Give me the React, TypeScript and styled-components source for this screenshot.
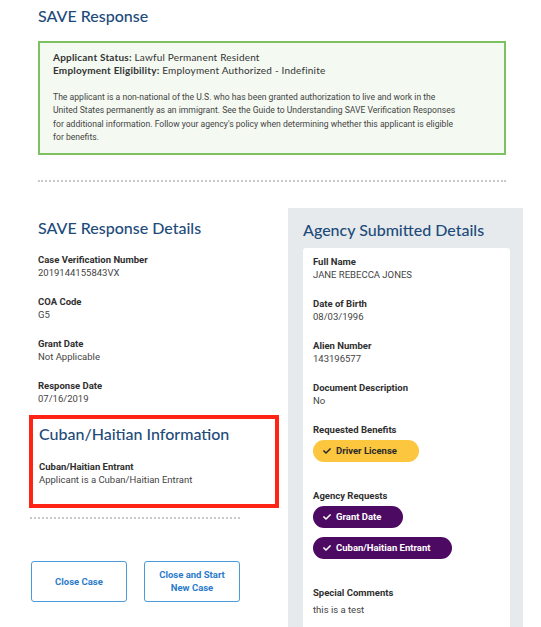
import React, { ReactElement } from "react";
import styled, { createGlobalStyle } from "styled-components";
import { FaCheck } from "react-icons/fa";

const GlobalStyle = createGlobalStyle`
  html, body {
    margin: 0;
    padding: 0;
    background: #ffffff;
  }
  body {
    font-family: Roboto, "Liberation Sans", sans-serif;
    color: #333;
  }
`;

const HEADING_FONT = `Lato, "Noto Sans", sans-serif`;

type Field = { label: string; value: string };

const responseDetails: Field[] = [
  { label: "Case Verification Number", value: "2019144155843VX" },
  { label: "COA Code", value: "G5" },
  { label: "Grant Date", value: "Not Applicable" },
  { label: "Response Date", value: "07/16/2019" },
];

const agencyDetails: Field[] = [
  { label: "Full Name", value: "JANE REBECCA JONES" },
  { label: "Date of Birth", value: "08/03/1996" },
  { label: "Alien Number", value: "143196577" },
  { label: "Document Description", value: "No" },
];

export default function App(): ReactElement {
  return (
    <>
      <GlobalStyle />
      <Page>
        <PageTitle>SAVE Response</PageTitle>
        <StatusBox>
          <StatusLine>
            <strong>Applicant Status:</strong> Lawful Permanent Resident
          </StatusLine>
          <StatusLine>
            <strong>Employment Eligibility:</strong> Employment Authorized - Indefinite
          </StatusLine>
          <StatusText>
            The applicant is a non-national of the U.S. who has been granted authorization to live and work in the
            <br />
            United States permanently as an immigrant. See the Guide to Understanding SAVE Verification Responses
            <br />
            for additional information. Follow your agency's policy when determining whether this applicant is eligible
            <br />
            for benefits.
          </StatusText>
        </StatusBox>
        <Divider $width={468} $top={25} />

        <Columns>
          <LeftColumn>
            <SectionTitle>SAVE Response Details</SectionTitle>
            <FieldList>
              {responseDetails.map(f => (
                <FieldItem key={f.label}>
                  <FieldLabel>{f.label}</FieldLabel>
                  <FieldValue>{f.value}</FieldValue>
                </FieldItem>
              ))}
            </FieldList>

            <Highlight>
              <SectionTitle>Cuban/Haitian Information</SectionTitle>
              <FieldItem $last>
                <FieldLabel>Cuban/Haitian Entrant</FieldLabel>
                <FieldValue>Applicant is a Cuban/Haitian Entrant</FieldValue>
              </FieldItem>
            </Highlight>
            <Divider $width={210} $offset={-8} $top={9} />

            <Actions>
              <ActionButton>Close Case</ActionButton>
              <ActionButton>
                Close and Start
                <br />
                New Case
              </ActionButton>
            </Actions>
          </LeftColumn>

          <AgencyPanel>
            <PanelTitle>Agency Submitted Details</PanelTitle>
            <AgencyCard>
              {agencyDetails.map(f => (
                <FieldItem key={f.label}>
                  <FieldLabel>{f.label}</FieldLabel>
                  <FieldValue>{f.value}</FieldValue>
                </FieldItem>
              ))}

              <Group>
                <FieldLabel>Requested Benefits</FieldLabel>
                <Pill $tone="yellow">
                  <FaCheck size={8} />
                  Driver License
                </Pill>
              </Group>

              <Group>
                <FieldLabel>Agency Requests</FieldLabel>
                <Pill $tone="purple">
                  <FaCheck size={8} />
                  Grant Date
                </Pill>
                <Pill $tone="purple">
                  <FaCheck size={8} />
                  Cuban/Haitian Entrant
                </Pill>
              </Group>

              <Group>
                <FieldLabel>Special Comments</FieldLabel>
                <FieldValue>this is a test</FieldValue>
              </Group>
            </AgencyCard>
          </AgencyPanel>
        </Columns>
      </Page>
    </>
  );
}

const Page = styled.div`
  padding-left: 38px;
  width: 503px;
  height: 627px;
  overflow: hidden;
`;

const PageTitle = styled.h1`
  margin: 0;
  padding-top: 5px;
  font-family: ${HEADING_FONT};
  font-size: 16px;
  font-weight: 500;
  line-height: 22px;
  color: #1d4b7a;
`;

const StatusBox = styled.div`
  margin-top: 14px;
  width: 468px;
  box-sizing: border-box;
  border: 2px solid #7fc161;
  background: #f4f9f2;
  padding: 8px 14px 8px 13px;
`;

const StatusLine = styled.div`
  font-family: ${HEADING_FONT};
  font-size: 10px;
  letter-spacing: 0.2px;
  line-height: 13px;
  color: #333;

  strong {
    font-weight: 700;
  }
`;

const StatusText = styled.p`
  margin: 14px 0 0;
  font-size: 8.6px;
  line-height: 13.4px;
  color: #444;
  white-space: nowrap;
`;

const Divider = styled.div<{ $width: number; $offset?: number; $top?: number }>`
  width: ${p => p.$width}px;
  margin-left: ${p => p.$offset ?? 0}px;
  margin-top: ${p => p.$top ?? 0}px;
  border-top: 2px dotted #c9c9c9;
`;

const Columns = styled.div`
  margin-top: 26px;
  display: flex;
  gap: 8px;
  align-items: flex-start;
`;

const LeftColumn = styled.div`
  width: 242px;
  padding-top: 9px;
  display: flex;
  flex-direction: column;
`;

const SectionTitle = styled.h2`
  margin: 0;
  font-family: ${HEADING_FONT};
  font-size: 16px;
  font-weight: 500;
  line-height: 22px;
  color: #1d4b7a;
`;

const FieldList = styled.div`
  margin-top: 14px;
  display: flex;
  flex-direction: column;
`;

const FieldItem = styled.div<{ $last?: boolean }>`
  margin-bottom: ${p => (p.$last ? 0 : 16)}px;
  display: flex;
  flex-direction: column;
`;

const FieldLabel = styled.div`
  font-size: 9.5px;
  font-weight: 700;
  line-height: 13px;
  color: #2f2f2f;
`;

const FieldValue = styled.div`
  font-size: 9.5px;
  line-height: 13px;
  color: #444;
`;

const Highlight = styled.section`
  margin: -6px 0 0 -9px;
  width: 250px;
  box-sizing: border-box;
  border: 4px solid #ff2415;
  padding: 4px 6px 18px;
  display: flex;
  flex-direction: column;
  gap: 15px;
`;

const Actions = styled.div`
  margin: 42px 0 0 -7px;
  display: flex;
  gap: 17px;
`;

const ActionButton = styled.button`
  width: 96px;
  height: 41px;
  box-sizing: border-box;
  border: 1px solid #4b9ada;
  border-radius: 3px;
  background: #ffffff;
  color: #2a7bc9;
  font-family: Roboto, "Liberation Sans", sans-serif;
  font-size: 9.5px;
  font-weight: 700;
  line-height: 13px;
  cursor: pointer;
  padding: 0;
`;

const AgencyPanel = styled.aside`
  width: 235px;
  min-height: 430px;
  box-sizing: border-box;
  background: #e7eaed;
  padding: 11px 13px 0 15px;
`;

const PanelTitle = styled.h2`
  margin: 0;
  font-family: ${HEADING_FONT};
  font-size: 16px;
  font-weight: 500;
  line-height: 22px;
  color: #1d4b7a;
`;

const AgencyCard = styled.div`
  margin-top: 7px;
  min-height: 400px;
  background: #ffffff;
  border-radius: 3px 3px 0 0;
  padding: 7px 10px 0;
  display: flex;
  flex-direction: column;
`;

const Group = styled.div`
  margin-bottom: 27px;
  display: flex;
  flex-direction: column;
  align-items: flex-start;
  gap: 4px;

  & > * + * + * {
    margin-top: 5px;
  }
`;

const Pill = styled.span<{ $tone: "yellow" | "purple" }>`
  display: inline-flex;
  align-items: center;
  gap: 5px;
  height: 22px;
  box-sizing: border-box;
  padding: 0 22px 0 10px;
  border-radius: 11px;
  font-size: 9.5px;
  font-weight: 700;
  background: ${p => (p.$tone === "yellow" ? "#fcc63f" : "#4d0a62")};
  color: ${p => (p.$tone === "yellow" ? "#2a2a2a" : "#ffffff")};
`;
